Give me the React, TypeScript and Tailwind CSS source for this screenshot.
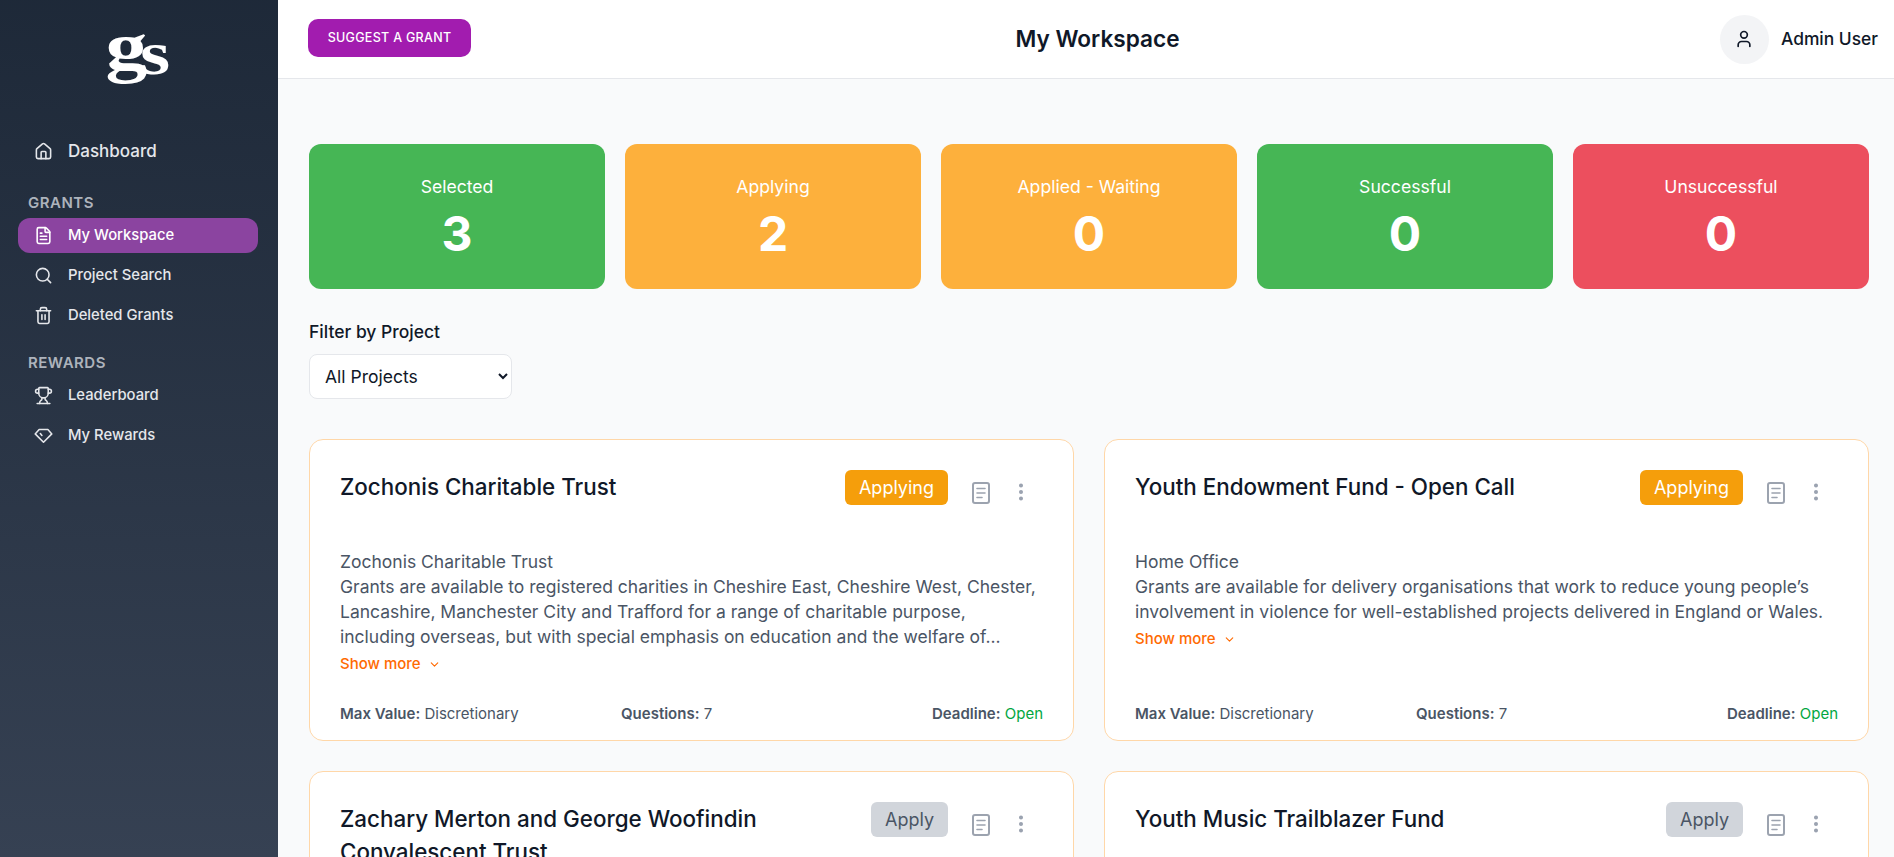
import { ChevronDown, EllipsisVertical, FileText, House, Search, Trash2, Trophy, User } from "lucide-react";

const stats = [
  { label: "Selected", value: 3, color: "bg-[#46b655]" },
  { label: "Applying", value: 2, color: "bg-[#fdb03c]" },
  { label: "Applied - Waiting", value: 0, color: "bg-[#fdb03c]" },
  { label: "Successful", value: 0, color: "bg-[#46b655]" },
  { label: "Unsuccessful", value: 0, color: "bg-[#ec4f5e]" },
];

const grants = [
  {
    title: "Zochonis Charitable Trust",
    status: "Applying",
    provider: "Zochonis Charitable Trust",
    desc: "Grants are available to registered charities in Cheshire East, Cheshire West, Chester, Lancashire, Manchester City and Trafford for a range of charitable purpose, including overseas, but with special emphasis on education and the welfare of...",
  },
  {
    title: "Youth Endowment Fund - Open Call",
    status: "Applying",
    provider: "Home Office",
    desc: "Grants are available for delivery organisations that work to reduce young people’s involvement in violence for well-established projects delivered in England or Wales.",
  },
  {
    title: "Zachary Merton and George Woofindin Convalescent Trust",
    status: "Apply",
    provider: "Zachary Merton and George Woofindin Convalescent Trust",
    desc: "Grants are available to registered charities for convalescent care.",
  },
  {
    title: "Youth Music Trailblazer Fund",
    status: "Apply",
    provider: "Youth Music",
    desc: "Grants are available for early stage music projects.",
  },
];

function DiamondIcon({ size = 19, strokeWidth = 2, className }: { size?: number; strokeWidth?: number; className?: string }) {
  return (
    <svg width={size} height={size} viewBox="0 0 24 24" fill="none" stroke="currentColor" strokeWidth={strokeWidth} strokeLinecap="round" strokeLinejoin="round" className={className}>
      <path d="M6.5 4.5h11L22.5 10 12 20.5 1.5 10z" />
      <path d="M8 9.5l2 2.5" />
    </svg>
  );
}

function NavItem({ icon: Icon, label, active, large }: { icon: typeof House | typeof DiamondIcon; label: string; active?: boolean; large?: boolean }) {
  return (
    <a className={`flex items-center gap-[15px] h-[35px] pl-[16px] rounded-xl font-medium ${large ? "text-[17px]" : "text-[14.8px]"} ${active ? "bg-[#8b44a0] text-white" : "text-gray-200"}`}>
      <Icon size={19} strokeWidth={2} className="shrink-0" />
      {label}
    </a>
  );
}

function DocIcon() {
  return (
    <svg width="18" height="22" viewBox="0 0 18 22" fill="none" stroke="#9ca3af" strokeWidth="2" strokeLinecap="round" strokeLinejoin="round">
      <rect x="1" y="1" width="16" height="20" rx="2" />
      <path d="M5 6.5h8M5 11h8M5 15.5h5" strokeWidth="1.6" />
    </svg>
  );
}

function GrantCard({ title, status, provider, desc }: (typeof grants)[number]) {
  return (
    <div className="flex flex-col min-h-[302px] rounded-[14px] border border-orange-200 bg-white pt-[30px] pl-[30px] pr-[30px] pb-[15px]">
      <div className="flex items-start justify-between h-[79px] pr-[11px]">
        <h3 className="text-[22.4px] leading-[33px] font-medium text-gray-900 max-w-[470px]">{title}</h3>
        <div className="flex items-start shrink-0">
          <span className={`h-[35px] flex items-center rounded-md px-[14px] text-[18px] ${status === "Applying" ? "bg-[#f59e0b] text-white" : "bg-[#d1d5db] text-gray-600"}`}>
            {status}
          </span>
          <span className="ml-[24px] mt-[12px]">
            <DocIcon />
          </span>
          <EllipsisVertical size={22} strokeWidth={2.4} className="ml-[20px] mt-[11px] text-gray-400" />
        </div>
      </div>
      <div className="text-[17.5px] leading-[25px] text-gray-600">
        <div>{provider}</div>
        <p className="line-clamp-3">{desc}</p>
      </div>
      <button className="flex items-center gap-[7px] mt-[4px] text-[15px] font-medium text-orange-500">
        Show more
        <ChevronDown size={13} />
      </button>
      <div className="mt-auto grid grid-cols-[281px_1fr_auto] items-center text-[15px] text-gray-600">
        <div><span className="font-semibold">Max Value:</span> Discretionary</div>
        <div><span className="font-semibold">Questions:</span> 7</div>
        <div><span className="font-semibold">Deadline:</span> <span className="text-green-600">Open</span></div>
      </div>
    </div>
  );
}

export default function App() {
  return (
    <div className="flex h-screen overflow-hidden bg-[#f9fafb] font-['Inter',sans-serif]">
      {/* Sidebar */}
      <aside className="flex flex-col w-[278px] shrink-0 bg-gradient-to-b from-gray-800 to-gray-700 pl-[18px] pr-[20px]">
        <div className="flex justify-center items-start h-[134px] pt-[12px] font-['Liberation_Serif',serif] font-bold text-white">
          <div className="flex scale-x-[1.25]">
            <span className="text-[67px] leading-[70px] tracking-[-6px]">g</span>
            <span className="text-[62px] leading-[70px] mt-[6px]">s</span>
          </div>
        </div>
        <NavItem icon={House} label="Dashboard" large />
        <div className="mt-[24px] mb-[5px] pl-[10px] text-[15px] leading-[20px] font-semibold tracking-[0.5px] text-[#adb3bc]">GRANTS</div>
        <div className="flex flex-col gap-[5px]">
          <NavItem icon={FileText} label="My Workspace" active />
          <NavItem icon={Search} label="Project Search" />
          <NavItem icon={Trash2} label="Deleted Grants" />
        </div>
        <div className="mt-[20px] mb-[5px] pl-[10px] text-[15px] leading-[20px] font-semibold tracking-[0.5px] text-[#adb3bc]">REWARDS</div>
        <div className="flex flex-col gap-[5px]">
          <NavItem icon={Trophy} label="Leaderboard" />
          <NavItem icon={DiamondIcon} label="My Rewards" />
        </div>
      </aside>

      <div className="flex-1 min-w-0 flex flex-col">
        {/* Header */}
        <header className="flex items-center justify-between h-[79px] shrink-0 bg-white border-b border-gray-200 pl-[30px] pr-[16px]">
          <button className="h-[38px] w-[163px] -mt-[2px] rounded-[10px] bg-[#a21caf] text-[12.5px] font-medium tracking-[0.3px] text-white">
            SUGGEST A GRANT
          </button>
          <h1 className="ml-[4px] text-[22.6px] font-semibold text-gray-900">My Workspace</h1>
          <div className="flex items-center gap-[12px]">
            <span className="flex items-center justify-center w-[49px] h-[49px] rounded-full bg-gray-100">
              <User size={20} className="text-gray-900" />
            </span>
            <span className="text-[17.4px] font-medium text-gray-900">Admin User</span>
          </div>
        </header>

        {/* Content */}
        <main className="flex-1 pt-[65px] pl-[31px] pr-[25px]">
          <div className="grid grid-cols-5 gap-[20px]">
            {stats.map((s) => (
              <div key={s.label} className={`flex flex-col items-center h-[145px] rounded-xl pt-[29px] text-white ${s.color}`}>
                <div className="text-[17.6px] leading-[27px]">{s.label}</div>
                <div className="mt-[4px] text-[48px] leading-[60px] font-bold">{s.value}</div>
              </div>
            ))}
          </div>

          <label className="block mt-[31px] mb-[10px] text-[17.5px] leading-[24px] font-medium text-gray-900">Filter by Project</label>
          <select className="block w-[203px] h-[45px] rounded-lg border border-gray-200 bg-white pl-[11px] text-[17.5px] text-gray-900">
            <option>All Projects</option>
          </select>

          <div className="grid grid-cols-2 gap-[30px] mt-[40px]">
            {grants.map((g) => (
              <GrantCard key={g.title} {...g} />
            ))}
          </div>
        </main>
      </div>
    </div>
  );
}
